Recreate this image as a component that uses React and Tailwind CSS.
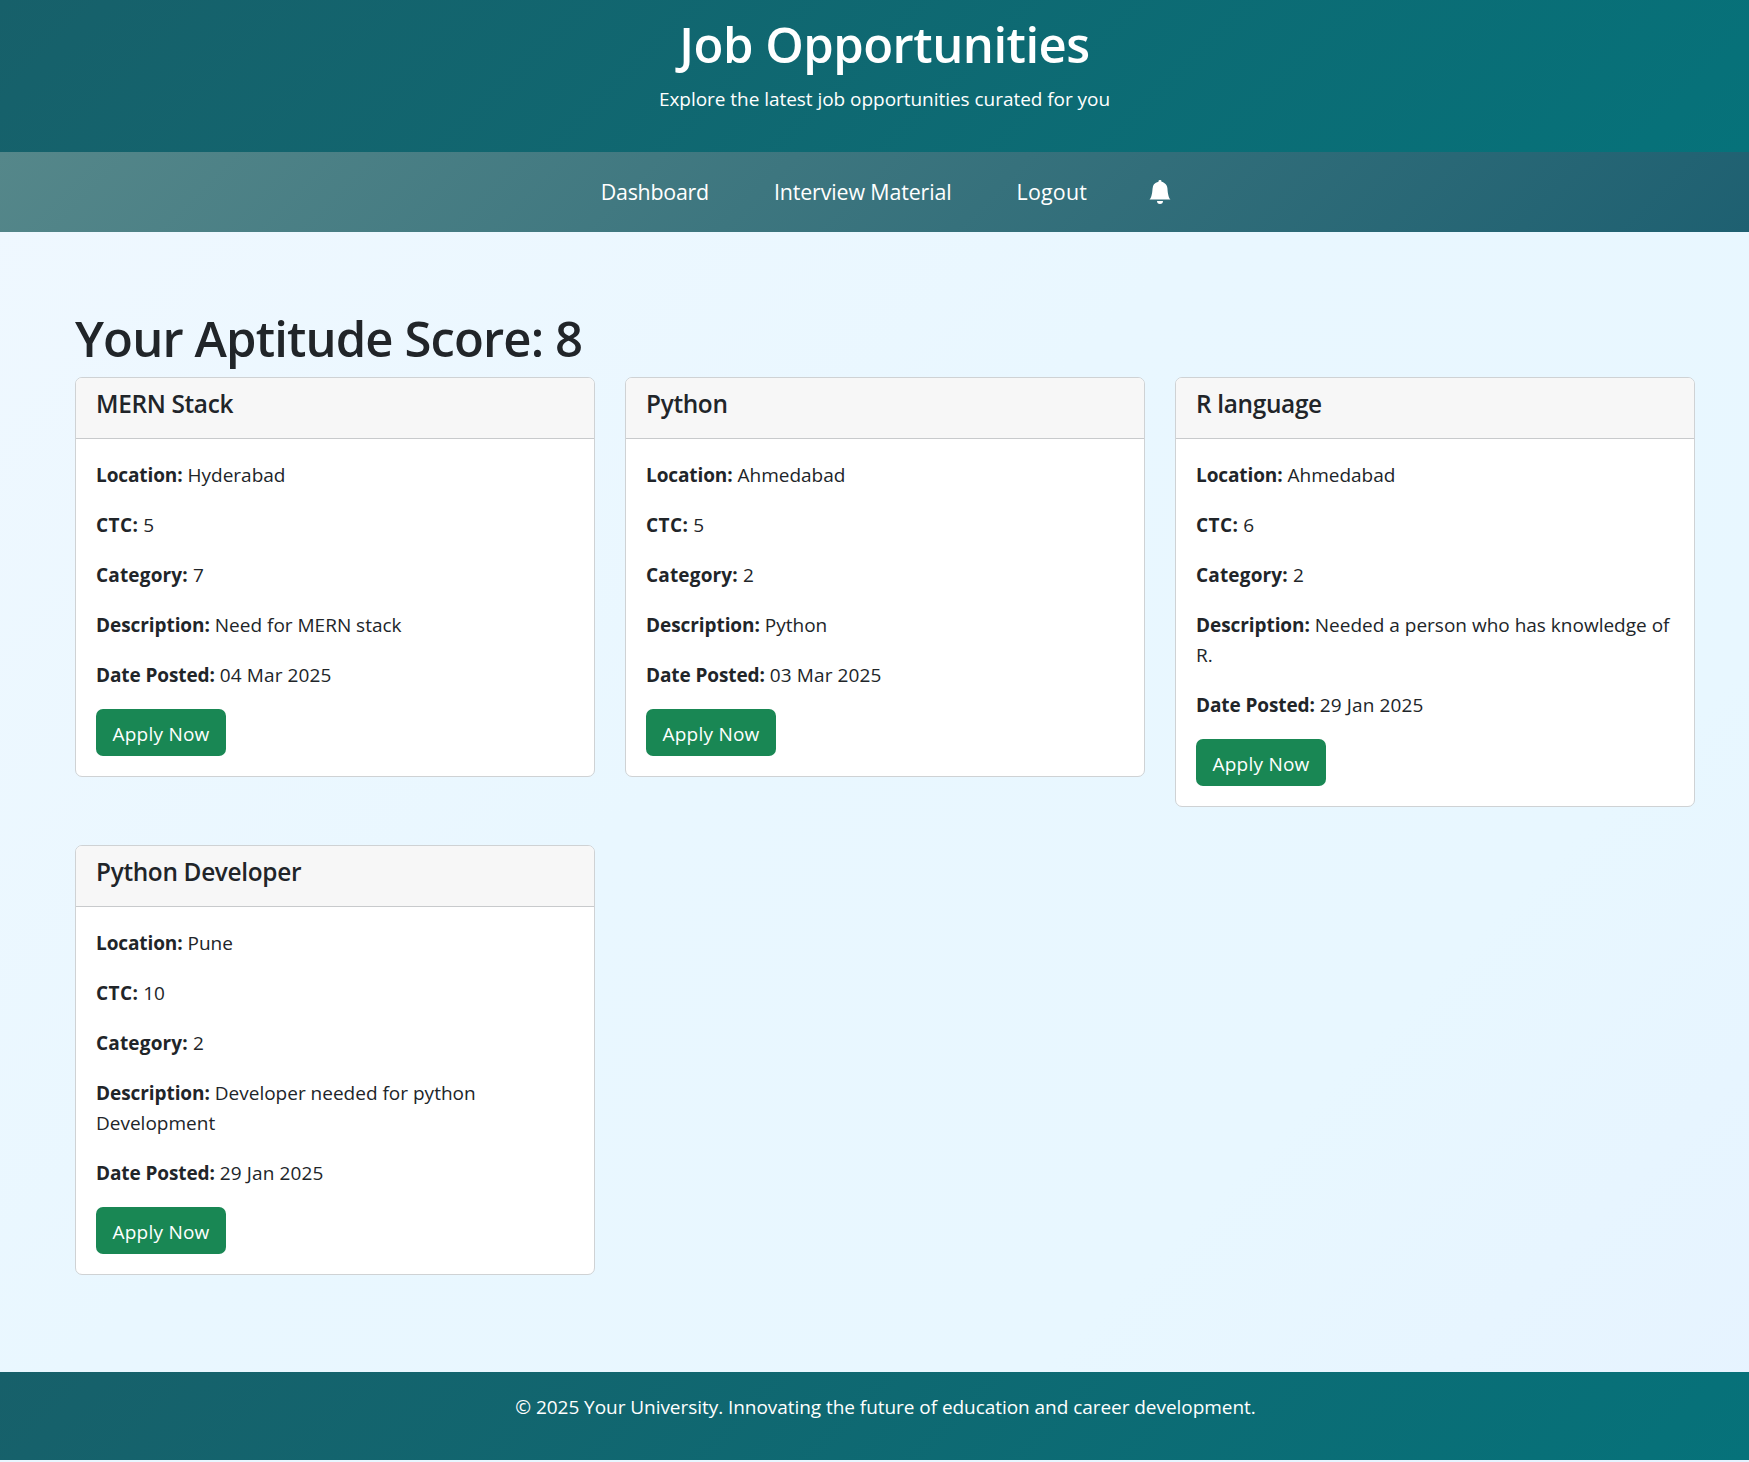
import React from "react";
import { BsBellFill } from "react-icons/bs";

const jobs = [
  { title: "MERN Stack", location: "Hyderabad", ctc: "5", category: "7", description: "Need for MERN stack", date: "04 Mar 2025" },
  { title: "Python", location: "Ahmedabad", ctc: "5", category: "2", description: "Python", date: "03 Mar 2025" },
  { title: "R language", location: "Ahmedabad", ctc: "6", category: "2", description: "Needed a person who has knowledge of R.", date: "29 Jan 2025" },
  { title: "Python Developer", location: "Pune", ctc: "10", category: "2", description: "Developer needed for python Development", date: "29 Jan 2025" },
];

function Field({ label, labelClass = "tracking-[-0.1px]", children }) {
  return (
    <p className="mb-5">
      <strong className={`font-bold ${labelClass}`}>{label}:</strong> {children}
    </p>
  );
}

function JobCard({ job }) {
  return (
    <article className="overflow-hidden rounded-[7px] border border-[#cfd2d4] bg-white">
      <header className="border-b border-[#c8cacc] bg-[#f7f7f7] px-5 pt-[11px] pb-[19px]">
        <h5 className="text-[24.4px] leading-[30px] font-[550] tracking-[-0.33px]">{job.title}</h5>
      </header>
      <div className="px-5 pt-[21px] pb-5">
        <Field label="Location">{job.location}</Field>
        <Field label="CTC" labelClass="tracking-[0.4px]">{job.ctc}</Field>
        <Field label="Category" labelClass="tracking-[0.17px]">{job.category}</Field>
        <Field label="Description" labelClass="tracking-[-0.07px]">{job.description}</Field>
        <Field label="Date Posted"><span className="tracking-[0.12px]">{job.date}</span></Field>
        <button className="-mt-px block h-[47px] w-[130px] rounded-[7px] bg-[#198754] pt-0.5 tracking-[0.25px] text-white">
          Apply Now
        </button>
      </div>
    </article>
  );
}

export default function App() {
  return (
    <div className="min-h-[1462px] bg-[linear-gradient(135deg,#f0f8ff,#e9f7ff_45%,#e8f7ff_75%,#e6f3ff)] font-['Open_Sans',sans-serif] text-[19px] leading-[30px] text-[#212529]">
      <header className="h-[152px] bg-[linear-gradient(135deg,#17606a,#06727a)] pt-3.5 pl-5 text-center text-white">
        <h1 className="text-[49px] leading-[60px] font-semibold tracking-[-0.5px]">Job Opportunities</h1>
        <p className="mt-2.5 tracking-[-0.04px]">Explore the latest job opportunities curated for you</p>
      </header>
      <nav className="flex h-20 items-center justify-center gap-[65px] bg-[linear-gradient(135deg,#55878a,#1e6071)] pl-6 text-[21.4px] text-white">
        <a className="tracking-[-0.25px]">Dashboard</a>
        <a className="tracking-[-0.13px]">Interview Material</a>
        <a className="tracking-[0.25px]">Logout</a>
        <BsBellFill className="-ml-1 size-6" />
      </nav>
      <main className="h-[1140px] pt-[76px] pr-[54px] pl-[75px]">
        <h1 className="mb-[9px] text-[49px] leading-[60px] font-[550] tracking-[-0.88px]">Your Aptitude Score: 8</h1>
        <div className="grid grid-cols-3 items-start gap-x-[30px] gap-y-[38px]">
          {jobs.map((job) => (
            <JobCard key={job.title} job={job} />
          ))}
        </div>
      </main>
      <footer className="h-[88px] bg-[linear-gradient(135deg,#17606a,#06727a)] pt-5 pl-[22px] text-center tracking-[-0.05px] text-white">
        © 2025 Your University. Innovating the future of education and career development.
      </footer>
    </div>
  );
}
